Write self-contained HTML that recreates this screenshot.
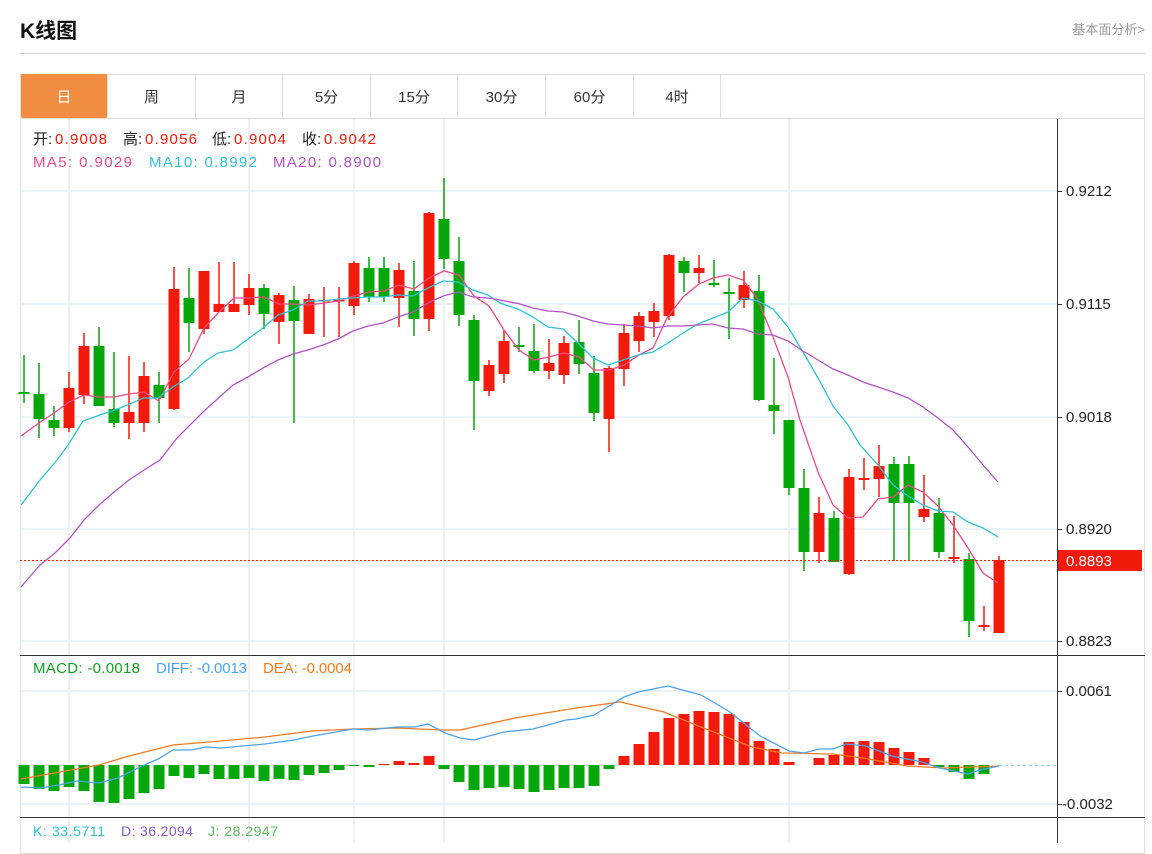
<!DOCTYPE html>
<html><head><meta charset="utf-8">
<style>
*{margin:0;padding:0;box-sizing:border-box}
body{width:1152px;height:843px;background:#fff;font-family:"Liberation Sans","Noto Sans CJK SC",sans-serif;position:relative;overflow:hidden}
.title{position:absolute;left:20px;top:15px;font-size:21px;font-weight:bold;color:#111}
.more{position:absolute;right:7px;top:19px;font-size:13px;color:#999}
.hr{position:absolute;left:20px;top:53px;width:1125px;height:1px;background:#ccc}
.box{position:absolute;left:20px;top:74px;width:1125px;height:780px;border:1px solid #ddd}
.tabs{position:absolute;left:20px;top:74px;height:45px;width:1125px;border-bottom:1px solid #ddd}
.tab{position:absolute;top:0;height:44px;line-height:47px;text-align:center;font-size:15px;color:#333;border-right:1px solid #ddd}
.tab.on{background:#f28c40;color:#fff}
svg{position:absolute;left:0;top:0}
</style></head><body>
<div class="title">K线图</div>
<div class="more">基本面分析&gt;</div>
<div class="hr"></div>
<div class="box"></div>
<div class="tabs">
<div class="tab on" style="left:1px;width:87px;border-radius:2px">日</div>
<div class="tab" style="left:88px;width:88px">周</div>
<div class="tab" style="left:176px;width:87px">月</div>
<div class="tab" style="left:263px;width:88px">5分</div>
<div class="tab" style="left:351px;width:87px">15分</div>
<div class="tab" style="left:438px;width:88px">30分</div>
<div class="tab" style="left:526px;width:88px">60分</div>
<div class="tab" style="left:614px;width:87px">4时</div>
</div>
<svg id="s" width="1152" height="843" xmlns="http://www.w3.org/2000/svg" font-family="Liberation Sans, Noto Sans CJK SC, sans-serif">
<g stroke="#e6edf3" stroke-width="1.5">
<line x1="20" y1="191" x2="1057" y2="191"/><line x1="20" y1="304" x2="1057" y2="304"/><line x1="20" y1="417" x2="1057" y2="417"/><line x1="20" y1="529" x2="1057" y2="529"/><line x1="20" y1="641" x2="1057" y2="641"/>
<line x1="20" y1="691" x2="1057" y2="691"/><line x1="20" y1="804" x2="1057" y2="804"/>
<line x1="69" y1="119" x2="69" y2="843"/><line x1="249" y1="119" x2="249" y2="843"/><line x1="354" y1="119" x2="354" y2="843"/><line x1="444" y1="119" x2="444" y2="843"/><line x1="789" y1="119" x2="789" y2="843"/>
</g>
<g id="c"></g>
<g stroke="#333" stroke-width="1">
<line x1="1057.5" y1="119" x2="1057.5" y2="843"/>
<line x1="20" y1="655.5" x2="1145" y2="655.5"/>
<line x1="20" y1="817.5" x2="1145" y2="817.5"/>
<line x1="1057" y1="191.5" x2="1062" y2="191.5"/><line x1="1057" y1="304.5" x2="1062" y2="304.5"/><line x1="1057" y1="417.5" x2="1062" y2="417.5"/><line x1="1057" y1="529.5" x2="1062" y2="529.5"/><line x1="1057" y1="641.5" x2="1062" y2="641.5"/><line x1="1057" y1="691.5" x2="1062" y2="691.5"/><line x1="1057" y1="804.5" x2="1062" y2="804.5"/>
</g>
<line x1="20" y1="560.5" x2="1057" y2="560.5" stroke="#f21a0a" stroke-dasharray="2,2"/>
<line x1="999" y1="765.5" x2="1057" y2="765.5" stroke="#9cc8ec" stroke-dasharray="3,3"/>
<rect x="1058" y="550" width="84" height="21" fill="#f21a0a"/>
<g font-size="15" fill="#222">
<text x="1066" y="196">0.9212</text><text x="1066" y="309">0.9115</text><text x="1066" y="422">0.9018</text><text x="1066" y="534">0.8920</text><text x="1066" y="646">0.8823</text>
<text x="1066" y="566" fill="#fff">0.8893</text>
<text x="1066" y="696">0.0061</text><text x="1062" y="809">-0.0032</text>
</g>
<g font-size="15">
<text y="144"><tspan x="33" fill="#222">开:</tspan><tspan x="55" fill="#f21a0a" textLength="52">0.9008</tspan><tspan x="123" fill="#222">高:</tspan><tspan x="145" fill="#f21a0a" textLength="52">0.9056</tspan><tspan x="212" fill="#222">低:</tspan><tspan x="234" fill="#f21a0a" textLength="52">0.9004</tspan><tspan x="302" fill="#222">收:</tspan><tspan x="324" fill="#f21a0a" textLength="52">0.9042</tspan></text>
<text y="167"><tspan x="33" fill="#ec4a85" textLength="99">MA5: 0.9029</tspan><tspan x="149" fill="#2cc3da" textLength="108">MA10: 0.8992</tspan><tspan x="273" fill="#b252c6" textLength="108">MA20: 0.8900</tspan></text>
<text y="673"><tspan x="33" fill="#10a020" textLength="107">MACD: -0.0018</tspan><tspan x="156" fill="#4aa3f0" textLength="91">DIFF: -0.0013</tspan><tspan x="263" fill="#f47a20" textLength="89">DEA: -0.0004</tspan></text>
<text y="836" font-size="14"><tspan x="33" fill="#2cc3da" textLength="72">K: 33.5711</tspan><tspan x="121" fill="#8a5cc8" textLength="72">D: 36.2094</tspan><tspan x="208" fill="#5cb85c" textLength="70">J: 28.2947</tspan></text>
</g>
</svg>
<script>
var R="#f21a0a",G="#06a70b";
var C=[[392,394,355,403,0],[394,419,363,438,0],[420,428,406,436,0],[388,428,372,432,1],[346,395,333,404,1],[346,406,327,406,0],[409,423,352,427,0],[412,423,356,439,1],[376,423,362,432,1],[385,398,372,423,0],
[289,409,267,410,1],[298,323,268,352,0],[271,329,271,334,1],[304,312,262,312,1],[304,312,262,312,1],[288,305,274,315,1],[288,314,284,329,0],[295,322,293,344,1],[300,321,286,423,0],[299,334,294,334,1],
[300,301,287,337,1],[300,301,287,337,1],[263,306,261,315,1],[268,297,257,302,0],[268,297,257,302,0],[270,298,263,327,1],[291,319,261,336,0],[213,319,212,331,1],[219,259,178,269,0],[261,315,237,326,0],
[320,381,315,430,0],[365,391,360,396,1],[341,374,330,383,1],[345,347,327,352,0],[351,371,324,373,0],[363,371,339,379,1],[343,375,336,384,1],[342,364,320,374,0],[373,413,356,421,0],[368,419,366,452,1],
[333,369,324,386,1],[316,341,312,352,1],[311,322,303,337,1],[255,316,254,320,1],[261,273,257,292,0],[268,273,255,283,1],[283,285,260,287,0],[292,294,278,339,0],[285,300,271,308,1],[291,400,275,401,0],
[405,411,358,434,0],[420,488,420,495,0],[488,552,469,571,0],[513,552,497,563,1],[518,562,511,562,0],[477,574,469,575,1],[478,480,458,490,1],[466,479,445,497,1],[464,503,457,561,0],[464,503,456,561,0],
[509,517,475,522,1],[513,552,498,558,0],[557,559,516,563,1],[559,621,553,637,0],[625,627,606,631,1],[560,633,556,633,1]];
var M=[784,789,791,787,791,802,803,799,793,789,776,778,774,779,779,778,781,779,780,775,773,770,766,767,764,761,763,756,769,782,790,788,787,789,792,790,788,788,786,769,756,744,732,718,714,711,712,714,722,741,749,762,765,758,755,742,741,742,748,752,758,767,772,779,774,765];
var h="";
M.forEach(function(v,i){var x=24+15*i-5.5;var t=Math.min(v,765),b=Math.max(v,765);if(b-t<1)return;h+='<rect x="'+x+'" y="'+t+'" width="11" height="'+(b-t)+'" fill="'+(v<765?R:G)+'"/>';});
C.forEach(function(c,i){var x=24+15*i;var col=c[4]?R:G;h+='<line x1="'+x+'" y1="'+c[2]+'" x2="'+x+'" y2="'+c[3]+'" stroke="'+col+'" stroke-width="1.5"/>';var hh=Math.max(c[1]-c[0],1.5);h+='<rect x="'+(x-5.5)+'" y="'+c[0]+'" width="11" height="'+hh+'" fill="'+col+'"/>';});
function pl(p,col){return '<polyline fill="none" stroke="'+col+'" stroke-width="1.3" points="'+p+'"/>';}
h+=pl("21,436 39,423 54,413 69,402 84,395 99,397 114,397 129,394 144,392 159,401 174,372 189,359 204,328 219,312 234,298 249,298 264,297 279,304 294,304 309,305 324,303 339,301 354,296 369,292 384,291 399,285 414,289 429,278 444,271 459,275 474,296 489,306 504,330 519,350 534,360 549,357 564,353 579,357 594,370 609,370 624,365 639,355 653,348 667,318 683,297 699,284 713,278 728,275 743,280 757,298 773,337 788,377 800,420 818,472 833,505 848,518 863,517 878,499 893,497 908,485 923,492 938,506 953,525 968,548 983,573 998,583","#ec4a85");
h+=pl("21,505 40,480 57,460 68,445 83,421 100,415 115,410 130,404 143,398 158,398 173,387 188,378 204,362 218,353 233,350 248,339 263,328 278,315 293,310 308,301 323,301 338,299 353,298 368,297 383,297 398,295 413,296 430,287 443,281 458,282 473,290 488,295 500,303 520,310 533,317 548,327 563,329 578,343 593,358 608,365 623,360 638,355 653,352 668,343 683,333 698,324 713,318 728,312 743,298 758,301 773,309 788,327 803,352 818,378 833,406 848,425 860,445 878,465 893,485 908,496 923,505 938,511 953,512 968,522 983,528 998,537","#2cc3da");
h+=pl("21,587 40,565 55,553 70,538 84,520 99,505 114,492 129,480 144,470 160,460 177,438 204,411 233,385 248,377 263,368 278,360 293,354 308,350 323,345 338,339 353,331 368,326 383,323 398,317 413,312 430,302 443,296 458,292 473,297 488,298 500,300 520,304 533,308 548,311 563,312 578,316 593,321 608,324 623,325 638,326 653,328 668,326 683,326 698,325 713,324 728,328 743,329 758,334 773,335 788,341 803,351 818,360 833,369 848,375 863,382 878,387 893,392 908,398 923,407 938,418 953,430 968,447 983,465 998,482","#b252c6");
h+=pl("21,779 99,765 129,756 173,745 221,741 265,737 312,731 353,729 397,728 441,730 460,730 515,718 576,708 620,702 664,712 701,727 752,747 782,753 833,754 863,758 907,766 944,768 999,766","#f47a20");
h+=pl("21,787 40,788 59,785 77,781 99,783 118,778 140,767 158,759 173,750 191,750 206,747 221,748 265,744 294,740 313,736 353,729 368,730 397,727 415,727 428,724 445,733 460,738 474,740 504,732 533,729 566,720 576,719 594,715 624,697 638,692 668,686 701,695 730,712 760,736 789,751 804,753 819,749 833,749 846,744 866,746 892,756 922,762 940,768 968,774 980,770 999,766","#4aa3f0");
document.getElementById("c").innerHTML=h;
</script>
</body></html>
